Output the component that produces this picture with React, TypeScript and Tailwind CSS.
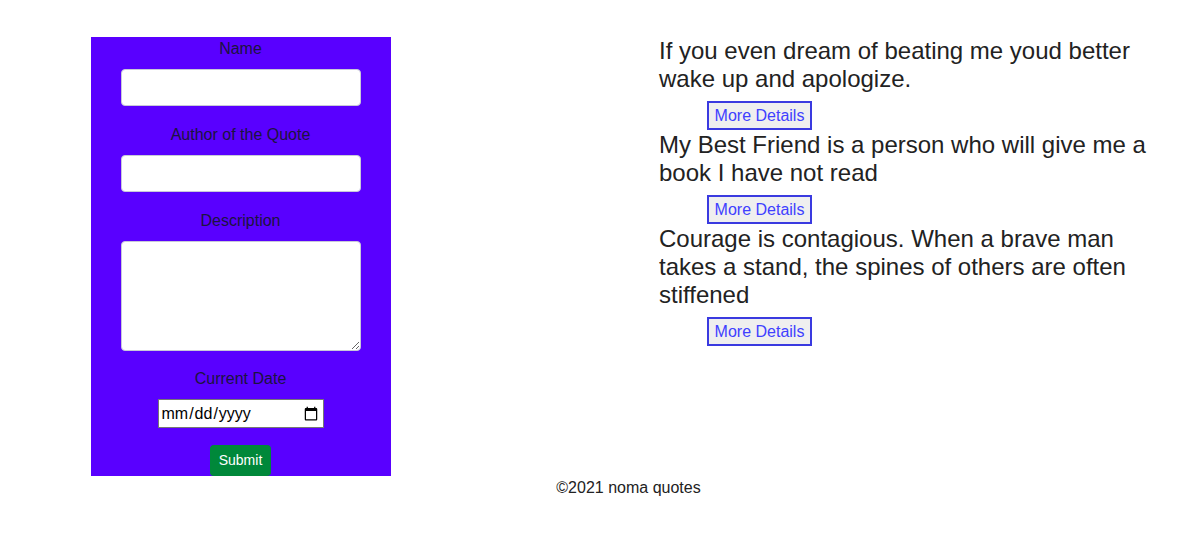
import React, { useState } from "react";

const quotes = [
  "If you even dream of beating me youd better wake up and apologize.",
  "My Best Friend is a person who will give me a book I have not read",
  "Courage is contagious. When a brave man takes a stand, the spines of others are often stiffened",
];

function QuoteForm() {
  const [name, setName] = useState("");
  const [author, setAuthor] = useState("");
  const [description, setDescription] = useState("");
  const [date, setDate] = useState("");

  return (
    <form
      onSubmit={(e) => e.preventDefault()}
      className="w-[300px] pr-[1px] bg-[#5900ff] flex flex-col items-center text-[16px] leading-[22px] text-[#1c1440]"
    >
      <label htmlFor="name" className="mt-[1px] mb-[9px]">Name</label>
      <input
        id="name"
        value={name}
        onChange={(e) => setName(e.target.value)}
        className="w-[240px] h-[37px] ml-[1px] bg-white rounded-[4px] border border-[#c8c8d8] mb-[17px] px-2"
      />
      <label htmlFor="author" className="mt-[1px] mb-[9px]">Author of the Quote</label>
      <input
        id="author"
        value={author}
        onChange={(e) => setAuthor(e.target.value)}
        className="w-[240px] h-[37px] ml-[1px] bg-white rounded-[4px] border border-[#c8c8d8] mb-[17px] px-2"
      />
      <label htmlFor="description" className="mt-[1px] mb-[9px]">Description</label>
      <textarea
        id="description"
        value={description}
        onChange={(e) => setDescription(e.target.value)}
        className="w-[240px] h-[110px] ml-[1px] bg-white rounded-[4px] border border-[#c8c8d8] mb-[16px] block"
      />
      <label htmlFor="date" className="mt-[1px] mb-[9px]">Current Date</label>
      <input
        id="date"
        type="date"
        value={date}
        onChange={(e) => setDate(e.target.value)}
        className="w-[166px] h-[29px] bg-white border border-[#767676] text-black text-[16px] px-[2px] mb-[17px]"
      />
      <button
        type="submit"
        className="w-[61px] h-[31px] bg-[#00883a] rounded-[4px] text-white text-[14px] leading-[16px] pb-[1px]"
      >
        Submit
      </button>
    </form>
  );
}

export default function App() {
  return (
    <div className="min-h-[540px] bg-white text-[#222] font-['Liberation_Sans',Arial,sans-serif]">
      <div className="flex items-start pt-[37px] pl-[91px]">
        <QuoteForm />
        <div className="ml-[268px] w-[500px]">
          {quotes.map((q, i) => (
            <div key={i}>
              <p className="text-[24px] leading-[28px]">{q}</p>
              <button className="ml-[48px] mt-[8px] mb-[1px] w-[105px] h-[29px] bg-[#efefef] border-2 border-[#3a3ae0] text-[#4040ff] text-[16px] leading-none">
                More Details
              </button>
            </div>
          ))}
        </div>
      </div>
      <footer className="pl-[57px] pt-[3px] text-center text-[16px] leading-[18px]">
        ©2021 noma quotes
      </footer>
    </div>
  );
}
